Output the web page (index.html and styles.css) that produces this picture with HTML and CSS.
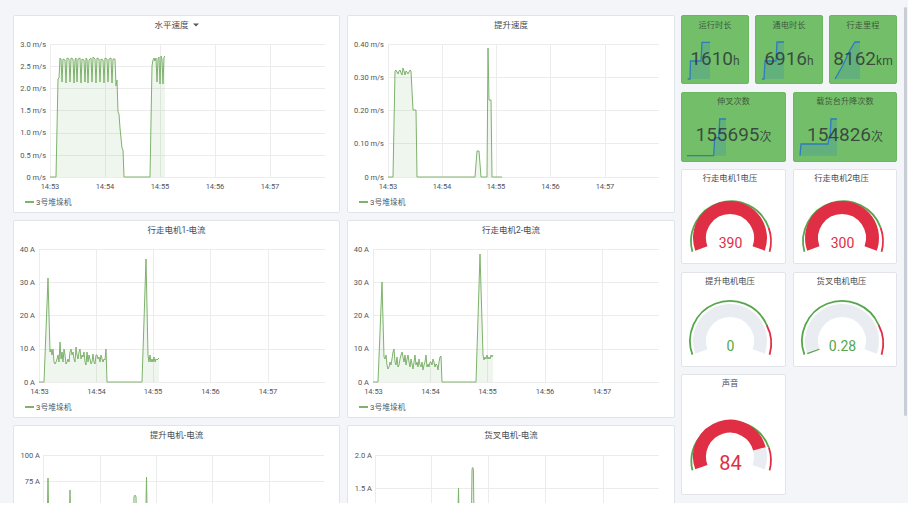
FILE: index.html
```html
<!DOCTYPE html>
<html lang="zh">
<head>
<meta charset="utf-8">
<title>堆垛机监控</title>
<link rel="stylesheet" href="styles.css">
</head>
<body>
<div class="dash">
  <div class="charts">
    <!-- 水平速度 -->
    <div class="panel chart">
      <div class="ptitle">水平速度<svg class="caret" width="6" height="4" viewBox="0 0 6 4"><path d="M0 0.5h6L3 3.5z"/></svg></div>
      <svg class="plot" width="325" height="158" viewBox="14 35 325 158">
        <path class="grid" d="M50 44.5H325M50 66.5H325M50 88.5H325M50 110.5H325M50 133.5H325M50 155.5H325M50 177.5H325M50.5 44V177M105.5 44V177M160.5 44V177M215.5 44V177M270.5 44V177"/>
        <g class="yl">
          <text x="46" y="46.7">3.0 m/s</text>
          <text x="46" y="68.7">2.5 m/s</text>
          <text x="46" y="90.7">2.0 m/s</text>
          <text x="46" y="113.2">1.5 m/s</text>
          <text x="46" y="135.4">1.0 m/s</text>
          <text x="46" y="157.5">0.5 m/s</text>
          <text x="46" y="179.7">0 m/s</text>
        </g>
        <g class="xl">
          <text x="50" y="188.7">14:53</text>
          <text x="105" y="188.7">14:54</text>
          <text x="160" y="188.7">14:55</text>
          <text x="215" y="188.7">14:56</text>
          <text x="270" y="188.7">14:57</text>
        </g>
        <path class="area" d="M50,177 L56,177 L58,79 L59,78 L60,58 L61,59 L62,82 L63,59 L65,60 L66,83 L67,58 L69,59 L70,82 L71,58 L73,59 L74,83 L75,60 L76,58 L77,82 L78,59 L80,58 L81,83 L82,59 L84,60 L85,82 L86,58 L87,59 L88,83 L89,60 L91,58 L92,82 L93,57 L95,59 L96,83 L97,58 L99,59 L100,82 L101,59 L103,60 L104,83 L105,58 L107,59 L108,82 L109,59 L111,58 L112,83 L113,59 L115,59 L116,86 L117,80 L118,112 L119,114 L120,128 L122,148 L123,150 L124,177 L150,177 L152,66 L153,60 L154,58 L155,61 L156,58 L157,82 L158,59 L159,57 L160,84 L161,56 L162,59 L163,84 L164,57 L165,56 L165,177 Z"/>
        <path class="line" d="M50,177 L56,177 L58,79 L59,78 L60,58 L61,59 L62,82 L63,59 L65,60 L66,83 L67,58 L69,59 L70,82 L71,58 L73,59 L74,83 L75,60 L76,58 L77,82 L78,59 L80,58 L81,83 L82,59 L84,60 L85,82 L86,58 L87,59 L88,83 L89,60 L91,58 L92,82 L93,57 L95,59 L96,83 L97,58 L99,59 L100,82 L101,59 L103,60 L104,83 L105,58 L107,59 L108,82 L109,59 L111,58 L112,83 L113,59 L115,59 L116,86 L117,80 L118,112 L119,114 L120,128 L122,148 L123,150 L124,177 L150,177 L152,66 L153,60 L154,58 L155,61 L156,58 L157,82 L158,59 L159,57 L160,84 L161,56 L162,59 L163,84 L164,57 L165,56"/>
      </svg>
      <div class="legend"><i></i><span>3号堆垛机</span></div>
    </div>

    <!-- 提升速度 -->
    <div class="panel chart">
      <div class="ptitle">提升速度</div>
      <svg class="plot" width="326" height="158" viewBox="348 35 326 158">
        <path class="grid" d="M388 44.5H659M388 77.5H659M388 110.5H659M388 143.5H659M388 177.5H659M388.5 44V177M442.5 44V177M496.5 44V177M550.5 44V177M605.5 44V177"/>
        <g class="yl">
          <text x="384" y="46.7">0.40 m/s</text>
          <text x="384" y="79.9">0.30 m/s</text>
          <text x="384" y="113.2">0.20 m/s</text>
          <text x="384" y="146.4">0.10 m/s</text>
          <text x="384" y="179.7">0 m/s</text>
        </g>
        <g class="xl">
          <text x="388" y="188.7">14:53</text>
          <text x="442" y="188.7">14:54</text>
          <text x="496" y="188.7">14:55</text>
          <text x="550.5" y="188.7">14:56</text>
          <text x="605" y="188.7">14:57</text>
        </g>
        <path class="area" d="M388,177 L393,177 L395,71 L396,70 L397,72 L398,74 L399,71 L400,70 L401,73 L402,75 L403,68 L404,71 L405,75 L406,71 L407,72 L408,74 L409,72 L410,70 L411,71 L413,110 L416,110 L417,177 L475,177 L477,151 L479,151 L481,177 L487,177 L488,48 L489,100 L491,100 L492,177 L502,177 Z"/>
        <path class="line" d="M388,177 L393,177 L395,71 L396,70 L397,72 L398,74 L399,71 L400,70 L401,73 L402,75 L403,68 L404,71 L405,75 L406,71 L407,72 L408,74 L409,72 L410,70 L411,71 L413,110 L416,110 L417,177 L475,177 L477,151 L479,151 L481,177 L487,177 L488,48 L489,100 L491,100 L492,177 L502,177"/>
      </svg>
      <div class="legend"><i></i><span>3号堆垛机</span></div>
    </div>

    <!-- 行走电机1-电流 -->
    <div class="panel chart">
      <div class="ptitle">行走电机1-电流</div>
      <svg class="plot" width="325" height="158" viewBox="14 240 325 158">
        <path class="grid" d="M39 249.5H325M39 282.5H325M39 315.5H325M39 349.5H325M39 382.5H325M39.5 249V382M96.5 249V382M153.5 249V382M210.5 249V382M268.5 249V382"/>
        <g class="yl">
          <text x="35" y="251.7">40 A</text>
          <text x="35" y="284.9">30 A</text>
          <text x="35" y="318.2">20 A</text>
          <text x="35" y="351.4">10 A</text>
          <text x="35" y="384.7">0 A</text>
        </g>
        <g class="xl">
          <text x="39.5" y="393.7">14:53</text>
          <text x="96.5" y="393.7">14:54</text>
          <text x="153" y="393.7">14:55</text>
          <text x="210.5" y="393.7">14:56</text>
          <text x="268" y="393.7">14:57</text>
        </g>
        <path class="area" d="M39,382 L44,382 L48,278 L50,352 L51,349 L52,355 L53,349 L54,362 L55,364 L56,362 L57,359 L58,355 L59,362 L60,342 L61,359 L62,352 L63,362 L64,349 L65,355 L66,364 L67,362 L68,359 L69,362 L70,352 L71,349 L72,355 L73,352 L74,359 L75,362 L76,347 L77,355 L78,359 L79,352 L80,349 L81,359 L82,355 L83,357 L84,352 L85,362 L86,365 L87,352 L88,362 L89,355 L90,359 L91,364 L92,362 L93,354 L94,362 L95,364 L96,355 L97,355 L98,359 L99,357 L100,362 L101,355 L102,359 L103,362 L104,359 L105,360 L106,349 L107,382 L142,382 L146,259 L148,355 L149,362 L150,355 L151,362 L152,359 L153,362 L154,357 L155,362 L156,359 L157,360 L158,359 L159,358 L159,382 Z"/>
        <path class="line" d="M39,382 L44,382 L48,278 L50,352 L51,349 L52,355 L53,349 L54,362 L55,364 L56,362 L57,359 L58,355 L59,362 L60,342 L61,359 L62,352 L63,362 L64,349 L65,355 L66,364 L67,362 L68,359 L69,362 L70,352 L71,349 L72,355 L73,352 L74,359 L75,362 L76,347 L77,355 L78,359 L79,352 L80,349 L81,359 L82,355 L83,357 L84,352 L85,362 L86,365 L87,352 L88,362 L89,355 L90,359 L91,364 L92,362 L93,354 L94,362 L95,364 L96,355 L97,355 L98,359 L99,357 L100,362 L101,355 L102,359 L103,362 L104,359 L105,360 L106,349 L107,382 L142,382 L146,259 L148,355 L149,362 L150,355 L151,362 L152,359 L153,362 L154,357 L155,362 L156,359 L157,360 L158,359 L159,358"/>
      </svg>
      <div class="legend"><i></i><span>3号堆垛机</span></div>
    </div>

    <!-- 行走电机2-电流 -->
    <div class="panel chart">
      <div class="ptitle">行走电机2-电流</div>
      <svg class="plot" width="326" height="158" viewBox="348 240 326 158">
        <path class="grid" d="M373 249.5H659M373 282.5H659M373 315.5H659M373 349.5H659M373 382.5H659M373.5 249V382M430.5 249V382M487.5 249V382M545.5 249V382M602.5 249V382"/>
        <g class="yl">
          <text x="369" y="251.7">40 A</text>
          <text x="369" y="284.9">30 A</text>
          <text x="369" y="318.2">20 A</text>
          <text x="369" y="351.4">10 A</text>
          <text x="369" y="384.7">0 A</text>
        </g>
        <g class="xl">
          <text x="373.5" y="393.7">14:53</text>
          <text x="430.5" y="393.7">14:54</text>
          <text x="487.5" y="393.7">14:55</text>
          <text x="545" y="393.7">14:56</text>
          <text x="602" y="393.7">14:57</text>
        </g>
        <path class="area" d="M373,382 L378,382 L382,282 L384,357 L385,359 L386,355 L387,365 L388,369 L389,367 L390,362 L391,365 L392,359 L393,352 L394,349 L395,362 L396,365 L397,357 L398,367 L399,365 L400,359 L401,355 L402,352 L403,357 L404,362 L405,355 L406,365 L407,359 L408,355 L409,362 L410,367 L411,359 L412,364 L413,369 L414,362 L415,355 L416,365 L417,362 L418,367 L419,359 L420,365 L421,367 L422,362 L423,370 L424,365 L425,362 L426,355 L427,367 L428,364 L429,367 L430,362 L431,362 L432,365 L433,359 L434,362 L435,367 L436,364 L437,365 L438,370 L439,362 L440,357 L441,356 L442,382 L476,382 L480,254 L483,355 L484,360 L485,357 L486,359 L487,355 L488,359 L489,357 L490,359 L491,355 L492,357 L493,355 L493,382 Z"/>
        <path class="line" d="M373,382 L378,382 L382,282 L384,357 L385,359 L386,355 L387,365 L388,369 L389,367 L390,362 L391,365 L392,359 L393,352 L394,349 L395,362 L396,365 L397,357 L398,367 L399,365 L400,359 L401,355 L402,352 L403,357 L404,362 L405,355 L406,365 L407,359 L408,355 L409,362 L410,367 L411,359 L412,364 L413,369 L414,362 L415,355 L416,365 L417,362 L418,367 L419,359 L420,365 L421,367 L422,362 L423,370 L424,365 L425,362 L426,355 L427,367 L428,364 L429,367 L430,362 L431,362 L432,365 L433,359 L434,362 L435,367 L436,364 L437,365 L438,370 L439,362 L440,357 L441,356 L442,382 L476,382 L480,254 L483,355 L484,360 L485,357 L486,359 L487,355 L488,359 L489,357 L490,359 L491,355 L492,357 L493,355"/>
      </svg>
      <div class="legend"><i></i><span>3号堆垛机</span></div>
    </div>

    <!-- 提升电机-电流 -->
    <div class="panel chart">
      <div class="ptitle">提升电机-电流</div>
      <svg class="plot" width="325" height="158" viewBox="14 445 325 158">
        <path class="grid" d="M43 455.5H324M43 481.5H324M43 507.5H324M43.5 455V600M100.5 455V600M156.5 455V600M212.5 455V600M269.5 455V600"/>
        <g class="yl">
          <text x="40" y="457.7">100 A</text>
          <text x="40" y="483.7">75 A</text>
        </g>
        <path class="area" d="M46.5,560 L48,478 L49.5,560 Z M68.5,560 L70,490 L71.5,560 Z M133,560 L134,497 Q135,493 136,497 L137,560 Z M145,560 L146.5,477 L148,560 Z"/>
        <path class="line" d="M46.5,560 L48,478 L49.5,560 M68.5,560 L70,490 L71.5,560 M133,560 L134,497 Q135,493 136,497 L137,560 M145,560 L146.5,477 L148,560"/>
      </svg>
    </div>

    <!-- 货叉电机-电流 -->
    <div class="panel chart">
      <div class="ptitle">货叉电机-电流</div>
      <svg class="plot" width="326" height="158" viewBox="348 445 326 158">
        <path class="grid" d="M375 455.5H659M375 488.5H659M375 521.5H659M375.5 455V600M431.5 455V600M488.5 455V600M545.5 455V600M603.5 455V600"/>
        <g class="yl">
          <text x="372" y="457.7">2.0 A</text>
          <text x="372" y="490.7">1.5 A</text>
        </g>
        <path class="area" d="M457,560 L458.5,488 L460,560 Z M471,560 L472,470 Q472.7,465 473.4,470 L474.5,560 Z"/>
        <path class="line" d="M457,560 L458.5,488 L460,560 M471,560 L472,470 Q472.7,465 473.4,470 L474.5,560"/>
      </svg>
    </div>
  </div>

  <div class="side">
    <div class="srow3">
      <div class="stat">
        <svg class="spark" viewBox="0 0 66 67" preserveAspectRatio="none"><path class="sf" d="M8,63 L8.5,45 L19,45 L20,26.3 L28,26.3 L28,63 Z"/><path class="sl" d="M5.7,63 L8,63 L8.5,45 L19,45 L20,26.3 L28,26.3"/></svg>
        <div class="stitle">运行时长</div>
        <div class="sval">1610<small>h</small></div>
      </div>
      <div class="stat">
        <svg class="spark" viewBox="0 0 66 67" preserveAspectRatio="none"><path class="sf" d="M8,63 L9,45 L20,45 L21,26 L28,26 L28,63 Z"/><path class="sl" d="M6,63 L8,63 L9,45 L20,45 L21,26 L28,26"/></svg>
        <div class="stitle">通电时长</div>
        <div class="sval">6916<small>h</small></div>
      </div>
      <div class="stat">
        <svg class="spark" viewBox="0 0 66 67" preserveAspectRatio="none"><path class="sf" d="M5,63 L13,49 L19,36 L23,29 L25,26 L30,26 L30,63 Z"/><path class="sl" d="M5,63 L13,49 L19,36 L23,29 L25,26 L30,26"/></svg>
        <div class="stitle">行走里程</div>
        <div class="sval">8162<small>km</small></div>
      </div>
    </div>
    <div class="srow2">
      <div class="stat">
        <svg class="spark" viewBox="0 0 103 68" preserveAspectRatio="none"><path class="sf" d="M31.7,62.7 L32.7,44.7 L36.7,44.7 L37.7,26 L44,26 L44,62.7 Z"/><path class="sl" d="M5,62.7 L31.7,62.7 L32.7,44.7 L36.7,44.7 L37.7,26 L44,26"/></svg>
        <div class="stitle">伸叉次数</div>
        <div class="sval">155695<small>次</small></div>
      </div>
      <div class="stat">
        <svg class="spark" viewBox="0 0 102 68" preserveAspectRatio="none"><path class="sf" d="M6,62.7 L7,51 L34,51 L35,45 L36,45 L37,26 L43,26 L43,62.7 Z"/><path class="sl" d="M6,62.7 L7,51 L34,51 L35,45 L36,45 L37,26 L43,26"/></svg>
        <div class="stitle">载货台升降次数</div>
        <div class="sval">154826<small>次</small></div>
      </div>
    </div>
    <div class="grow">
      <div class="panel gauge">
        <div class="gtitle">行走电机1电压</div>
        <svg width="103" height="77" viewBox="0 0 103 77">
          <path class="ring" d="M10.41,65.68 A40,40 0 0 1 86.64,41.65"/>
          <path class="ring red" d="M86.64,41.65 A40,40 0 0 1 87.59,65.68"/>
          <path class="arc red" d="M19.34,62.43 A30.5,30.5 0 1 1 76.66,62.43"/>
          <text class="gv red" x="48.5" y="62.3">390</text>
        </svg>
      </div>
      <div class="panel gauge">
        <div class="gtitle">行走电机2电压</div>
        <svg width="102" height="77" viewBox="0 0 102 77">
          <path class="ring" d="M10.41,65.68 A40,40 0 0 1 86.64,41.65"/>
          <path class="ring red" d="M86.64,41.65 A40,40 0 0 1 87.59,65.68"/>
          <path class="arc red" d="M19.34,62.43 A30.5,30.5 0 1 1 76.66,62.43"/>
          <text class="gv red" x="48.5" y="62.3">300</text>
        </svg>
      </div>
    </div>
    <div class="grow g2">
      <div class="panel gauge">
        <div class="gtitle">提升电机电压</div>
        <svg width="103" height="77" viewBox="0 0 103 77">
          <path class="ring" d="M10.41,65.68 A40,40 0 0 1 84.66,35.99"/>
          <path class="ring red" d="M84.66,35.99 A40,40 0 0 1 87.59,65.68"/>
          <path class="arc empty" d="M19.34,62.43 A30.5,30.5 0 1 1 76.66,62.43"/>
          <text class="gv green" x="48.5" y="62.3">0</text>
        </svg>
      </div>
      <div class="panel gauge">
        <div class="gtitle">货叉电机电压</div>
        <svg width="102" height="77" viewBox="0 0 102 77">
          <path class="ring" d="M10.41,65.68 A40,40 0 0 1 84.66,35.99"/>
          <path class="ring red" d="M84.66,35.99 A40,40 0 0 1 87.59,65.68"/>
          <path class="arc empty" d="M19.34,62.43 A30.5,30.5 0 1 1 76.66,62.43"/>
          <path class="tick" d="M25.45,60.21 L13.23,64.65"/>
          <text class="gv green" x="48.5" y="62.3">0.28</text>
        </svg>
      </div>
    </div>
    <div class="grow g3">
      <div class="panel gauge">
        <div class="gtitle">声音</div>
        <svg width="103" height="103" viewBox="0 0 103 103">
          <path class="ring" d="M10.41,79.38 A40,40 0 0 1 86.97,56.7"/>
          <path class="ring red" d="M86.97,56.7 A40,40 0 0 1 87.59,79.38"/>
          <path class="arc empty" d="M77.46,57.81 A30.5,30.5 0 0 1 76.66,76.13"/>
          <path class="arc red" d="M19.34,76.13 A30.5,30.5 0 1 1 77.46,57.81"/>
          <text class="gv big red" x="48.5" y="78.8">84</text>
        </svg>
      </div>
    </div>
  </div>
  <div class="scroll"></div>
</div>
</body>
</html>
```
FILE: styles.css
```css
* { box-sizing: border-box; margin: 0; padding: 0; }

body {
  width: 908px;
  height: 512px;
  overflow: hidden;
  background: #ffffff;
  font-family: Roboto, "Noto Sans CJK SC", sans-serif;
  color: #464c54;
}

.dash {
  position: relative;
  height: 503px;
  background: #f4f5f8;
  display: flex;
  align-items: flex-start;
  gap: 6px;
  padding: 15px 0 0 13px;
  overflow: hidden;
}

.charts {
  display: grid;
  grid-template-columns: 327px 328px;
  grid-auto-rows: 198px;
  gap: 7px;
}

.panel {
  background: #ffffff;
  border: 1px solid #e1e4e9;
  border-radius: 2px;
}

.chart {
  display: flex;
  flex-direction: column;
  overflow: hidden;
}

.ptitle {
  height: 19px;
  line-height: 19px;
  text-align: center;
  font-size: 8.5px;
  color: #464c54;
}

.caret {
  margin-left: 4px;
  vertical-align: 1px;
  fill: #555a62;
}

.plot { display: block; }

.plot .grid {
  fill: none;
  stroke: #ececec;
  stroke-width: 1;
}

.plot text {
  font-size: 7.5px;
  fill: #52555c;
}

.plot .yl text { text-anchor: end; }
.plot .xl text { text-anchor: middle; }

.plot .line {
  fill: none;
  stroke: #7eb26d;
  stroke-width: 1;
  stroke-linejoin: round;
}

.plot .area {
  fill: rgba(126, 178, 109, 0.12);
  stroke: none;
}

.legend {
  height: 17px;
  display: flex;
  align-items: center;
  gap: 2px;
  padding-left: 11px;
  font-size: 7.8px;
  color: #52555c;
}

.legend i {
  display: block;
  width: 9px;
  height: 2px;
  background: #7eb26d;
}

/* right column */
.side {
  width: 216px;
  display: flex;
  flex-direction: column;
  gap: 7px;
}

.srow3 {
  display: grid;
  grid-template-columns: 68px 68px 68px;
  column-gap: 6px;
  height: 69px;
}

.srow2 {
  display: grid;
  grid-template-columns: 105px 104px;
  column-gap: 7px;
  height: 70px;
  margin-top: 1px;
}

.stat {
  position: relative;
  background: #73bf69;
  border: 1px solid #6cb762;
  border-radius: 2px;
  overflow: hidden;
  text-align: center;
}

.spark {
  position: absolute;
  left: 0;
  top: 0;
  width: 100%;
  height: 100%;
}

.spark .sf { fill: rgba(31, 120, 193, 0.2); }
.spark .sl {
  fill: none;
  stroke: #2f7bbd;
  stroke-width: 1.3;
}

.stitle {
  position: relative;
  height: 18px;
  line-height: 18px;
  font-size: 8.2px;
  color: rgba(40, 44, 40, 0.72);
}

.sval {
  position: relative;
  margin-top: 12px;
  height: 26px;
  line-height: 26px;
  font-size: 19px;
  color: rgba(46, 48, 54, 0.82);
  white-space: nowrap;
}

.srow2 .stitle { height: 16px; line-height: 16px; }
.srow2 .sval { margin-top: 13px; }

.sval small { font-size: 12px; }

.grow {
  display: grid;
  grid-template-columns: 105px 104px;
  column-gap: 7px;
  height: 95px;
}

.grow.g2 { margin-top: 1px; }
.grow.g3 { height: 121px; }

.gauge {
  overflow: hidden;
}

.gauge svg { display: block; }

.gtitle {
  height: 16px;
  line-height: 16px;
  padding-right: 7px;
  text-align: center;
  font-size: 8.3px;
  color: #464c54;
}

.gauge .ring {
  fill: none;
  stroke: #56a64b;
  stroke-width: 1.8;
}

.gauge .ring.red { stroke: #e02f44; }

.gauge .arc {
  fill: none;
  stroke-width: 13;
}

.gauge .arc.red { stroke: #e02f44; }
.gauge .arc.empty { stroke: #e9ecf0; }

.gauge .tick {
  stroke: #56a64b;
  stroke-width: 1.2;
}

.gauge .gv {
  font-size: 14px;
  text-anchor: middle;
}

.gauge .gv.big { font-size: 20px; }
.gauge .gv.red { fill: #e02f44; }
.gauge .gv.green { fill: #56a64b; }

.scroll {
  position: absolute;
  right: 1px;
  top: 7px;
  width: 3px;
  height: 409px;
  border-radius: 2px;
  background: #c9ced6;
}
```
